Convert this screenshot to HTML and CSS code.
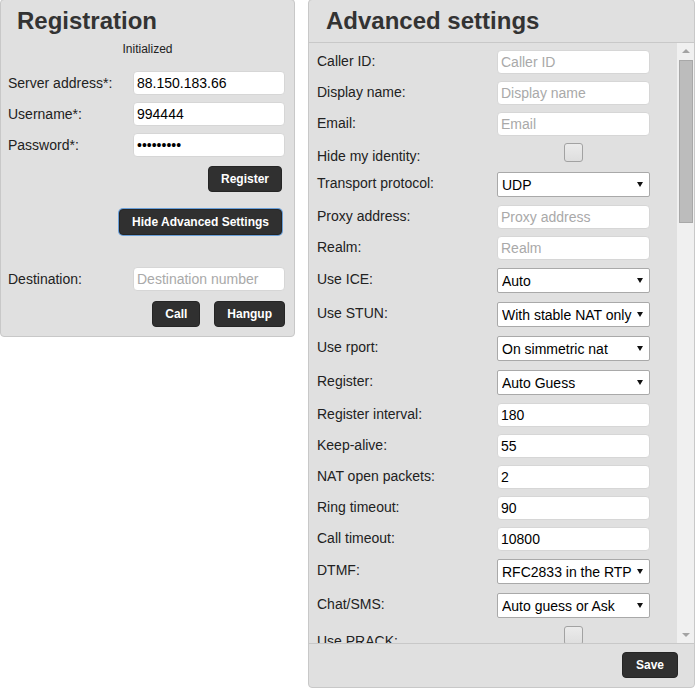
FILE: index.html
```html
<!DOCTYPE html>
<html>
<head>
<meta charset="utf-8">
<title>Registration</title>
<link rel="stylesheet" href="styles.css">
</head>
<body>
<div class="page">
  <section class="panel reg">
    <h1 class="title">Registration</h1>
    <div class="status">Initialized</div>
    <div class="field first"><label>Server address*:</label><input class="inp" type="text" value="88.150.183.66"></div>
    <div class="field"><label>Username*:</label><input class="inp" type="text" value="994444"></div>
    <div class="field"><label>Password*:</label><input class="inp" type="password" value="123456789"></div>
    <div class="actions act-register"><button class="btn">Register</button></div>
    <div class="actions act-hide"><button class="btn focus">Hide Advanced Settings</button></div>
    <div class="field dest"><label>Destination:</label><input class="inp" type="text" placeholder="Destination number"></div>
    <div class="actions act-call"><button class="btn">Call</button><button class="btn">Hangup</button></div>
  </section>

  <section class="panel adv">
    <h1 class="title">Advanced settings</h1>
    <div class="body">
      <div class="content">
        <div class="r"><label>Caller ID:</label><input class="inp" type="text" placeholder="Caller ID"></div>
        <div class="r"><label>Display name:</label><input class="inp" type="text" placeholder="Display name"></div>
        <div class="r"><label>Email:</label><input class="inp" type="text" placeholder="Email"></div>
        <div class="r c"><label>Hide my identity:</label><div class="cbw"><input class="cb" type="checkbox"></div></div>
        <div class="r s"><label>Transport protocol:</label><div class="selw"><select><option>UDP</option></select></div></div>
        <div class="r"><label>Proxy address:</label><input class="inp" type="text" placeholder="Proxy address"></div>
        <div class="r"><label>Realm:</label><input class="inp" type="text" placeholder="Realm"></div>
        <div class="r s"><label>Use ICE:</label><div class="selw"><select><option>Auto</option></select></div></div>
        <div class="r s"><label>Use STUN:</label><div class="selw"><select><option>With stable NAT only</option></select></div></div>
        <div class="r s"><label>Use rport:</label><div class="selw"><select><option>On simmetric nat</option></select></div></div>
        <div class="r s"><label>Register:</label><div class="selw"><select><option>Auto Guess</option></select></div></div>
        <div class="r"><label>Register interval:</label><input class="inp" type="text" value="180"></div>
        <div class="r"><label>Keep-alive:</label><input class="inp" type="text" value="55"></div>
        <div class="r"><label>NAT open packets:</label><input class="inp" type="text" value="2"></div>
        <div class="r"><label>Ring timeout:</label><input class="inp" type="text" value="90"></div>
        <div class="r"><label>Call timeout:</label><input class="inp" type="text" value="10800"></div>
        <div class="r s"><label>DTMF:</label><div class="selw"><select><option>RFC2833 in the RTP</option></select></div></div>
        <div class="r s"><label>Chat/SMS:</label><div class="selw"><select><option>Auto guess or Ask</option></select></div></div>
        <div class="r c last"><label>Use PRACK:</label><div class="cbw"><input class="cb" type="checkbox"></div></div>
      </div>
      <div class="scrollbar">
        <div class="sb-btn"><span class="arrow-up"></span></div>
        <div class="sb-thumb"></div>
        <div class="sb-space"></div>
        <div class="sb-btn"><span class="arrow-down"></span></div>
      </div>
    </div>
    <div class="footer"><button class="btn save">Save</button></div>
  </section>
</div>
</body>
</html>
```

FILE: styles.css
```css
* { box-sizing: border-box; }
html, body { margin: 0; padding: 0; overflow: hidden; }
body {
  font-family: "Liberation Sans", Arial, sans-serif;
  font-size: 14px;
  color: #222;
  background: #fff;
}
.page { display: flex; align-items: flex-start; gap: 13px; }

.panel {
  background: #e0e0e0;
  border: 1px solid #c8c8c8;
  border-radius: 4px;
  margin-top: -1px;
}
.title {
  margin: 0;
  font-size: 24px;
  font-weight: bold;
  line-height: 28px;
  color: #333;
}

/* Registration */
.reg { width: 295px; padding: 0 0 9px 0; display: flex; flex-direction: column; }
.reg .title { padding: 7px 0 0 16px; }
.status {
  margin-top: 7px;
  text-align: center;
  font-size: 12px;
  line-height: 14px;
  color: #222;
}
.field { display: flex; align-items: baseline; padding-left: 7px; margin-bottom: 7px; }
.field label { width: 125px; flex-shrink: 0; line-height: 16px; }
.field .inp { width: 152px; }
.field.first { margin-top: 15px; }
.field.dest { margin-top: 32px; margin-bottom: 10px; }

.inp {
  height: 24px;
  border: 1px solid #d6d6d6;
  border-radius: 4px;
  background: #fff;
  font-family: "Liberation Sans", Arial, sans-serif;
  font-size: 14px;
  color: #000;
  padding: 0 3px;
  margin: 0;
  outline: none;
}
.inp::placeholder { color: #a9a9a9; }

.actions { display: flex; justify-content: flex-end; gap: 14px; }
.act-register { padding-right: 12px; margin-top: 2px; }
.act-hide { padding-right: 12px; margin-top: 17px; }
.act-call { padding-right: 9px; }

.btn {
  height: 26px;
  padding: 0 12px;
  margin: 0;
  background: #303030;
  color: #fff;
  border: 1px solid #252525;
  border-radius: 4px;
  font-family: "Liberation Sans", Arial, sans-serif;
  font-size: 12px;
  font-weight: bold;
  cursor: pointer;
}
.btn.focus { box-shadow: 0 0 0 1px #6a9fd8; }

/* Advanced settings */
.adv { width: 387px; display: flex; flex-direction: column; }
.adv .title { padding: 7px 0 7px 17px; border-bottom: 1px solid #c8c8c8; }
.body { display: flex; height: 600px; }
.content { flex: 1; overflow: hidden; padding: 3px 0 0 8px; display: flex; flex-direction: column; }

.r { display: flex; align-items: flex-start; height: 31px; flex-shrink: 0; }
.r label { width: 180px; flex-shrink: 0; padding-top: 7px; line-height: 16px; }
.r .inp { width: 153px; margin-top: 4px; }
.r.s { height: 34px; }
.r.s label { padding-top: 8px; }
.r.c { height: 28px; }
.r.c label { padding-top: 9px; }
.r.c.last label { padding-top: 11px; }

.selw { position: relative; width: 153px; height: 25px; margin-top: 5px; }
.selw select {
  appearance: none;
  -webkit-appearance: none;
  width: 100%;
  height: 100%;
  margin: 0;
  border: 1px solid #a9a9a9;
  border-radius: 2px;
  background: #fff;
  font-family: "Liberation Sans", Arial, sans-serif;
  font-size: 14px;
  color: #000;
  padding: 0 0 0 4px;
  outline: none;
}
.selw::after {
  content: "";
  position: absolute;
  right: 7px;
  top: 10px;
  border-left: 3.5px solid transparent;
  border-right: 3.5px solid transparent;
  border-top: 5px solid #111;
  pointer-events: none;
}

.cbw { width: 153px; display: flex; justify-content: center; margin-top: 4px; }
.cb {
  appearance: none;
  -webkit-appearance: none;
  width: 19px;
  height: 19px;
  margin: 0;
  border: 1px solid #a2a2a2;
  border-radius: 3px;
  background: linear-gradient(#ebebeb, #dedede);
}

.scrollbar { width: 17px; flex-shrink: 0; background: #f0f0f0; display: flex; flex-direction: column; }
.sb-btn { height: 17px; display: flex; align-items: center; justify-content: center; flex-shrink: 0; }
.arrow-up {
  border-left: 4px solid transparent;
  border-right: 4px solid transparent;
  border-bottom: 4px solid #a3a3a3;
  margin-top: -2px;
}
.arrow-down {
  border-left: 4px solid transparent;
  border-right: 4px solid transparent;
  border-top: 4px solid #a3a3a3;
  margin-top: 1px;
}
.sb-thumb {
  height: 163px;
  margin: 0 1px 0 2px;
  background: #bcbcbc;
  border: 1px solid #a8a8a8;
  flex-shrink: 0;
}
.sb-space { flex: 1; }

.footer {
  height: 44px;
  border-top: 1px solid #c8c8c8;
  padding: 8px 16px 0 0;
  display: flex;
  justify-content: flex-end;
  align-items: flex-start;
}
.btn.save { padding: 0 13px; }
```
